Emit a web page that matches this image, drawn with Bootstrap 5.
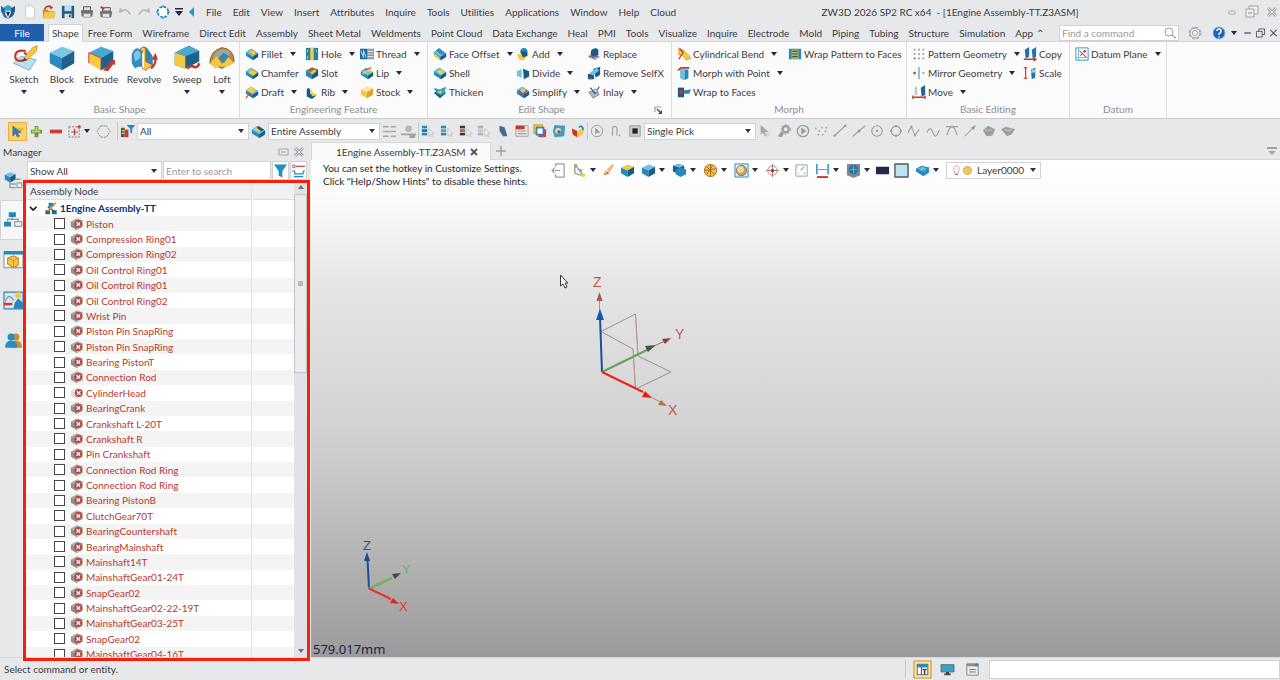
<!DOCTYPE html>
<html lang="en">
<head>
<meta charset="utf-8">
<meta name="viewport" content="width=device-width, initial-scale=1">
<title>ZW3D 2026 SP2 RC x64 - [1Engine Assembly-TT.Z3ASM]</title>
<link href="https://cdn.jsdelivr.net/npm/bootstrap@5.3.0/dist/css/bootstrap.min.css" rel="stylesheet">
<style>
:root{--chrome:#e6e8ea;--line:#c9cbcd;--ink:#3b3b42;--red-ink:#b8392f}
body{font:10px/14px Lato,"Noto Sans",sans-serif;font-variant-ligatures:none;color:var(--ink);background:var(--chrome)}
a{color:inherit;text-decoration:none}
button{font:inherit;color:inherit}
.tool{border:0;background:none;padding:0;display:inline-flex;align-items:center;justify-content:center;white-space:nowrap;font-variant-ligatures:none}
[data-ic]{display:inline-flex;flex:none;width:16px;height:16px}
[data-ic] svg{width:100%;height:100%;overflow:visible}
.tri{flex:none;width:0;height:0;border:3px solid transparent;border-top:4px solid #26264a;border-bottom:0}
.titlebar{height:24px}
.titlebar .quick{width:19px}
.titlebar .quick [data-ic]{width:14px;height:14px}
.titlebar .quick-end{width:13px}
.menus{gap:11px}
.tabrow{height:18px;border-bottom:1px solid #d3d6d9}
.tabrow .nav-link{padding:0 5px;line-height:18px;color:var(--ink);white-space:nowrap}
.tabrow .file-tab{background:#1f5fae;color:#fff;width:44px;padding:0;text-align:center}
.tabrow .nav-link.active{background:#fbfbfb;border:1px solid #d0d3d6;border-bottom:0;line-height:17px;height:18px;padding:0 3px}
.doc-ctl [data-ic]{width:13px}
.find{width:120px;height:16px;border:1px solid #cfd1d3;background:#fff}
input.plain{font:inherit;line-height:14px;border:0;min-height:0;padding:0 2px;background:transparent;color:var(--ink);border-radius:0;min-width:0}
input.plain::placeholder{color:#9a9a9e}
.ribbon{height:77px;background:#fbfbfb;border-bottom:1px solid var(--line)}
.rgroup{border-right:1px solid #dcdee0;padding:2px 5px 0 5px}
.rgroup h2{font-size:10px;line-height:14px;color:#8d8d92;margin:0;text-align:center;font-weight:400}
.cmds{display:grid;grid-auto-flow:column;grid-template-rows:repeat(3,19px);justify-content:start;height:58px}
.cmds .tool{justify-content:flex-start;gap:2px}
.cmds [data-ic]{width:14px;height:14px}
.cmds .tri{margin-left:5px}
.g1{width:240px}.g2{width:188px}.g3{width:244px}.g4{width:235px}.g5{width:163px}.g6{width:97px}
.g2 .cmds{grid-template-columns:60px 55px auto}
.g3 .cmds{grid-template-columns:83px 71px auto}
.g4 .cmds{grid-template-columns:111px auto}
.g5 .cmds{grid-template-columns:111px auto}
.bigs{display:grid;grid-template-columns:38px 38px 40px 46px 40px 30px;height:58px}
.bigs .tool{flex-direction:column;justify-content:flex-start}
.bigs [data-ic]{width:28px;height:28px}
.bigs .tri{margin-top:4px}
.bar{height:24px;padding-left:3px}
.bar .tool{width:19px;height:19px}
.bar .hot{background:#fbd36b;border:1px solid #e8ad3c}
.bar [data-ic]{width:15px;height:15px}
.bar .grip{width:5px}
.vsep{width:1px;height:18px;background:#c6c8ca;flex:none}
.share{flex:none}.share .tool{flex:1 1 0;width:auto}
.share-a{width:168px}.share-b{width:56px}.share-c{width:261px}
.share [data-ic]{width:14px;height:14px}
.form-select.pick{font:inherit;line-height:14px;height:17px;padding:0 14px 0 2px;border:1px solid #cfd1d3;border-radius:0;color:var(--ink);width:112px;flex:none;background:#fff url("data:image/svg+xml,%3Csvg xmlns='http://www.w3.org/2000/svg' viewBox='0 0 6 4'%3E%3Cpath d='M0 0h6L3 4z' fill='%2333333a'/%3E%3C/svg%3E") no-repeat right 4px center/6px 4px}
.manager{width:311px;flex:none}
.m-head{height:17px;padding:0 4px 0 3px}
.rail{width:26px;flex:none}
.rail .tool{height:40px;width:26px}
.rail .tool.on{background:#f6f7f8;border:1px solid #d3d5d7}
.rail [data-ic]{width:19px;height:19px}
.m-search{height:20px;gap:1px;padding:1px 4px 0 0;margin-left:1px}
.m-search .pick{width:135px}
.m-search .box{border:1px solid #cfd1d3;background-color:#fff;height:19px}
.m-search .tool{width:19px}
.m-search .tool [data-ic]{width:15px}
.frame-red{position:absolute;inset:0 0 -4px -3px;border:3px solid #f5200d;z-index:3;pointer-events:none}
.tree{margin-right:1px}
.t-head{height:20px;padding-left:4px;line-height:22px;background:#f0f1f2;border-bottom:1px solid #dadcde;flex:none}
.t-root{height:16px;gap:1px;color:#0b2f78;flex:none;background:#fff}
.t-root [data-ic]{height:13px}
.t-cols{background:#fff}
.t-cols::after{content:"";position:absolute;top:0;bottom:0;left:225px;width:1px;background:#e0e2e4}
.nodes{height:calc(100% - 31px);flex:none}
.nodes li{flex:1 1 0;min-height:0;padding-left:28px;color:var(--red-ink)}
.nodes li:nth-child(odd){background:#f4f4f4}
.nodes input{appearance:none;width:11px;height:11px;border:1px solid #45454a;background:#fff;margin:0 5px 0 0;border-radius:0}
.nodes [data-ic]{width:14px;height:14px;margin-right:2px}
.sbar{width:16px;background:#dfe3e6;flex:none;padding:1px 3px 0 0}
.sbar .thumb{height:179px;border:1px solid #c2c4c8;background:#e9ebed;margin-top:1px}
.sbar .thumb i{width:5px;height:5px;background:#b6b8bb}
.sbar button{height:12px}
.sbar .tri{border-top-color:#6d6f73}
.up{transform:rotate(180deg)}
.doc-tabs{height:17px;border-bottom:1px solid #d5d7d9}
.doc-tabs .doc{width:180px;flex:none;background:#fafafa;height:18px;border:1px solid #d5d7d9;border-bottom:0;padding:0 8px 0 24px}
.stage{background:linear-gradient(#fff 0,#fbfbfb 7%,#e6e6e6 24%,#d2d2d2 54%,#b9b9b9 76%,#9a9b9a 100%)}
.hint{width:230px;line-height:13px;color:#25252a;padding:2px 0 0 12px;white-space:nowrap}
.view-tools{height:20px;padding-left:8px}
.view-tools .tool{min-width:19px;height:19px}
.view-tools .tool.dd{width:31px;gap:3px;padding-left:1px}
.view-tools [data-ic]{width:15px;height:15px}
.view-tools .layer{border:1px solid #cfd1d3;background:#fff;width:95px;height:17px;margin-left:4px;padding-left:4px}
.view-tools .layer .form-select.pick{width:65px;border:0;height:14px;margin-left:2px}
.view-tools .layer [data-ic]{width:11px;height:11px}
.scene{position:absolute;overflow:visible}
.scene-main{left:240px;top:105px}
.scene-triad{left:45px;top:375px}
.scale{position:absolute;left:2px;bottom:0;font:13px/15px "Noto Sans",sans-serif;color:#23234f}
.status{height:23px;border-top:1px solid #d6d8da;padding-left:4px}
.status .fill{width:291px;height:19px;border:1px solid #cfd1d3;background:#fff}
.status .tool{width:25px;height:19px}
.status [data-ic]{width:13px;height:13px}
.status .st-on [data-ic]{width:17px;height:17px}
</style>
</head>
<body class="vh-100 d-flex flex-column overflow-hidden">

<header>
  <div class="titlebar d-flex align-items-center">
    <span data-ic="logo"></span>
    <div class="d-flex align-items-center ps-1" id="quick"></div>
    <nav class="menus d-flex ms-1 ps-1" id="menus" aria-label="Main menu"></nav>
    <span class="mx-auto text-nowrap">ZW3D 2026 SP2 RC x64 &nbsp;- [1Engine Assembly-TT.Z3ASM]</span>
    <div class="d-flex gap-1">
      <button class="tool" aria-label="Minimize"><span data-ic="wmin"></span></button>
      <button class="tool" aria-label="Restore"><span data-ic="wres"></span></button>
      <button class="tool" aria-label="Close"><span data-ic="wclose"></span></button>
    </div>
  </div>
  <div class="tabrow d-flex">
    <nav class="nav flex-nowrap" id="tabs" aria-label="Ribbon tabs"></nav>
    <div class="ms-auto d-flex align-items-center">
      <label class="find d-flex align-items-center"><input class="plain form-control flex-fill" placeholder="Find a command" aria-label="Find a command"><span data-ic="search"></span></label>
      <button class="tool ms-2" aria-label="Settings"><span data-ic="gear"></span></button>
      <button class="tool ms-2 gap-1" aria-label="Help"><span data-ic="help"></span><i class="tri"></i></button>
      <div class="doc-ctl d-flex ms-1">
        <button class="tool" aria-label="Minimize document"><span data-ic="dmin"></span></button>
        <button class="tool" aria-label="Restore document"><span data-ic="dres"></span></button>
        <button class="tool" aria-label="Close document"><span data-ic="dclose"></span></button>
      </div>
    </div>
  </div>
  <div class="ribbon d-flex">
    <section class="rgroup g1"><div class="bigs" data-big="Sketch*,Block*,Extrude,Revolve,Sweep*,Loft*"></div><h2>Basic Shape</h2></section>
    <section class="rgroup g2"><div class="cmds" data-cmds="Fillet*,Chamfer,Draft*,Hole*,Slot,Rib*,Thread*,Lip*,Stock*"></div><h2>Engineering Feature</h2></section>
    <section class="rgroup g3"><div class="cmds" data-cmds="Face Offset*,Shell,Thicken,Add*,Divide*,Simplify*,Replace,Remove SelfX,Inlay*"></div><h2 class="d-flex"><span class="flex-fill">Edit Shape</span><span data-ic="launch"></span></h2></section>
    <section class="rgroup g4"><div class="cmds" data-cmds="Cylindrical Bend*,Morph with Point*,Wrap to Faces,Wrap Pattern to Faces"></div><h2>Morph</h2></section>
    <section class="rgroup g5"><div class="cmds" data-cmds="Pattern Geometry*,Mirror Geometry*,Move*,Copy,Scale"></div><h2>Basic Editing</h2></section>
    <section class="rgroup g6"><div class="cmds" data-cmds="Datum Plane*"></div><h2>Datum</h2></section>
  </div>
  <div class="bar d-flex align-items-center">
    <span data-ic="grip" class="grip"></span>
    <button class="tool hot" aria-label="Pick"><span data-ic="pick"></span></button>
    <button class="tool" aria-label="Add to selection"><span data-ic="plus"></span></button>
    <button class="tool" aria-label="Remove from selection"><span data-ic="minus"></span></button>
    <button class="tool" aria-label="Window select"><span data-ic="winsel"></span></button>
    <i class="tri"></i>
    <button class="tool ms-1" aria-label="Polygon select"><span data-ic="hexa"></span></button>
    <span class="vsep ms-1"></span>
    <button class="tool" aria-label="Filter"><span data-ic="colfilter"></span></button>
    <select class="form-select pick" aria-label="Entity filter"><option>All</option></select>
    <button class="tool" aria-label="Scope"><span data-ic="scope"></span></button>
    <select class="form-select pick" aria-label="Scope"><option>Entire Assembly</option></select>
    <button class="tool" aria-label="Align"><span data-ic="align1"></span></button>
    <button class="tool" aria-label="Section"><span data-ic="align2"></span></button>
    <span class="vsep"></span>
    <div class="share share-a d-flex" data-tools="sel1,sel2,sel3,sel4,book,sheet,copyb,globe,find3"></div>
    <span class="vsep"></span>
    <div class="share share-b d-flex" data-tools="circ-cursor,magnet,square"></div>
    <select class="form-select pick" aria-label="Pick mode"><option>Single Pick</option></select>
    <div class="share share-c d-flex" data-tools="gcursor,ggear,gplay,gdots,gline,gmid,gcdot,gcirc,gzig,gwave,gtan,garrow,gface,gface2"></div>
  </div>
</header>

<main class="d-flex flex-fill" style="min-height:0">
  <aside class="manager d-flex flex-column">
    <div class="m-head d-flex align-items-center"><span>Manager</span>
      <button class="tool ms-auto" aria-label="Float"><span data-ic="mfloat"></span></button>
      <button class="tool" aria-label="Close manager"><span data-ic="wclose"></span></button></div>
    <div class="d-flex flex-fill" style="min-height:0">
      <div class="rail d-flex flex-column">
        <button class="tool" aria-label="History"><span data-ic="rail1"></span></button>
        <button class="tool on" aria-label="Assembly"><span data-ic="rail2"></span></button>
        <button class="tool" aria-label="Visual"><span data-ic="rail3"></span></button>
        <button class="tool" aria-label="Render"><span data-ic="rail4"></span></button>
        <button class="tool" aria-label="Roles"><span data-ic="rail5"></span></button>
      </div>
      <div class="d-flex flex-column flex-fill" style="min-width:0">
        <div class="m-search d-flex">
          <select class="form-select pick box" aria-label="Show"><option>Show All</option></select>
          <input class="plain form-control box flex-fill" placeholder="Enter to search" aria-label="Enter to search">
          <button class="tool box" aria-label="Filter tree"><span data-ic="funnel"></span></button>
          <button class="tool box" aria-label="Options"><span data-ic="opts"></span></button>
        </div>
        <div class="position-relative d-flex flex-fill tree" style="min-height:0">
          <div class="position-relative t-cols d-flex flex-column flex-fill overflow-hidden">
            <div class="t-head">Assembly Node</div>
            <div class="t-root d-flex align-items-center fw-bold"><span data-ic="chev"></span><span data-ic="asm"></span><span>1Engine Assembly-TT</span></div>
            <ul class="nodes list-unstyled m-0 d-flex flex-column" id="nodes"></ul>
          </div>
          <div class="sbar d-flex flex-column">
            <button class="tool" aria-label="Scroll up"><i class="tri up"></i></button>
            <div class="thumb d-flex align-items-center justify-content-center"><i></i></div>
            <button class="tool mt-auto" aria-label="Scroll down"><i class="tri"></i></button>
          </div>
          <div class="frame-red"></div>
        </div>
      </div>
    </div>
  </aside>

  <section class="flex-fill d-flex flex-column" style="min-width:0">
    <div class="doc-tabs d-flex align-items-center">
      <div class="doc d-flex align-items-center justify-content-between"><span class="text-nowrap">1Engine Assembly-TT.Z3ASM</span><button class="tool" aria-label="Close tab"><span data-ic="tabx"></span></button></div>
      <button class="tool" aria-label="New tab"><span data-ic="tabplus"></span></button>
      <button class="tool ms-auto" aria-label="Tab list"><span data-ic="tablist"></span></button>
    </div>
    <div class="stage position-relative flex-fill overflow-hidden">
      <div class="d-flex">
        <div class="hint">You can set the hotkey in Customize Settings.<br>Click "Help/Show Hints" to disable these hints.</div>
        <div class="view-tools d-flex align-items-center" id="view"></div>
      </div>

      <svg class="scene scene-main" width="150" height="160" viewBox="0 0 150 160" fill="none" font-family="Liberation Sans, sans-serif" font-size="14">
        <path d="M50 66.500 84.500 49 87 91 120 107 84.500 124 82 84 50 66.500" stroke="#949494"/>
        <path d="M84.500 49 87 91M82 84 84.500 124" stroke="#e08d80" stroke-width=".6"/>
        <path d="M48.500 55V36" stroke="#d7806c"/><path d="M48.500 27l-3 9h6z" fill="#a3564b"/>
        <path d="M51 107 49 52" stroke="#1c4fa2" stroke-width="2"/><path d="M49 44l-4 11h8z" fill="#1356b0"/>
        <path d="M51 107 98 84" stroke="#5fa653" stroke-width="2"/><path d="M105 80l-11 1 3 6z" fill="#46524b"/>
        <path d="M103 81 114 76" stroke="#a06a60"/><path d="M120 73l-9 1 3 5z" fill="#96403d"/>
        <path d="M51 107 92 127" stroke="#ef2215" stroke-width="2"/><path d="M101 133l-10-1 3-6z" fill="#e51e12"/>
        <path d="M100 132l9 5" stroke="#c98060"/><path d="M116 141l-9-1 3-5z" fill="#b07636"/>
        <text x="42" y="22" fill="#c2594b">Z</text><text x="124" y="74" fill="#c2594b">Y</text><text x="117" y="150" fill="#c2594b">X</text>
        <path d="M9.500 10v11l2.500-2 2 4 2-1-2-4h3z" fill="#fff" stroke="#3a3a3a"/>
      </svg>
      <svg class="scene scene-triad" width="60" height="80" viewBox="0 0 60 80" fill="none" font-family="Liberation Sans, sans-serif" font-size="13">
        <path d="M13 53.500 11.500 24" stroke="#1e4f9d" stroke-width="2"/><path d="M11 17l-3 9h6z" fill="#134c9f"/>
        <path d="M13 53.500 36 43" stroke="#72b25f" stroke-width="3"/><path d="M45 38l-9 1 3 5z" fill="#3f484d"/>
        <path d="M13 53.500 35 64" stroke="#ec3023" stroke-width="2"/><path d="M43 69l-9-1 3-5z" fill="#e52519"/>
        <text x="7" y="15" fill="#1c54a8">Z</text><text x="46" y="39" fill="#6bb35c">Y</text><text x="43" y="76" fill="#e8362a">X</text>
      </svg>
      <div class="scale">579.017mm</div>
    </div>
  </section>
</main>

<footer class="status d-flex align-items-center">
  <span>Select command or entity.</span>
  <span class="vsep ms-auto me-1"></span>
  <button class="tool st-on" aria-label="Manager pane"><span data-ic="st1"></span></button>
  <button class="tool" aria-label="Display"><span data-ic="st2"></span></button>
  <button class="tool" aria-label="Output"><span data-ic="st3"></span></button>
  <div class="fill ms-1"></div>
</footer>

<script>
const B='#2589bd',D='#165a86',L='#6ec3e0',Y='#f6c944',O='#d18b27',R='#c8372b',G='#9b9da0',K='#46484c';
const p=(d,f,s='none',w=1)=>`<path d="${d}" fill="${f}" stroke="${s}" stroke-width="${w}" stroke-linejoin="round"/>`;
const c=(x,y,r,f,s='none',w=1)=>`<circle cx="${x}" cy="${y}" r="${r}" fill="${f}" stroke="${s}" stroke-width="${w}"/>`;
const cube=(t,l,r)=>p('M1 5 8 1.5 15 4 8 8z',t)+p('M1 5 8 8V15L1 11z',l)+p('M8 8 15 4V11L8 15z',r);
const slab=p('M1 6 7 2 15 7V11L9 15 1 10z',B)+p('M1 6 7 2 15 7 9 11z',L)+p('M9 11 15 7V11L9 15z',D);
const cur=(f='#fff',s=G)=>p('M9 5v9l2-2 2 3 1-1-2-3h3z',f,s,.8);
const list=(a,b)=>p('M1 2h6v3H1z',a)+p('M1 6h6v3H1z',b)+p('M1 10h6v3H1z',a)+cur('#f0f0f0','#b9bbbd');
const line=(d,s=G,w=1.200)=>p(d,'none',s,w);
const person=(x,f)=>c(x,5,3,f)+p(`M${x-5} 14q0-6 5-6t5 6z`,f);
const I={
 logo:p('M1 2 6 5 5 10 8 15 4 13 1 7z','#1a6fae')+p('M15 2 10 5 11 9 8 15 13 12 15 7z','#1e5f8e')+p('M4 3 8 1 12 3 8 8z','#2aa0cf')+p('M6 8h4l-2 5z','#21364a'),
 new:p('M3 1h7l3 3v11H3z','#fff','#c1c3c5'),
 open:p('M1 5h5l2 2h6v8H1z',O)+p('M3 8h13l-2 7H1z',Y)+line('M3 5q2-5 7-3',R,2)+p('M9 0l4 3-4 2z',R),
 save:p('M1 1h14v14H1z','#255a86')+p('M4 1h8v6H4z','#b9e0ee')+p('M4 10h8v5H4z','#dfe5e9')+p('M9 11h2v3H9z',K),
 print:p('M4 2h8v5H4z','#ddd',K)+p('M1 6h14l-1 7H2z','#6a6c70')+p('M4 10h8v4H4z','#e8e8e8',G),
 print2:p('M4 3h9v4H4z','#ddd',K)+p('M1 7h14l-1 7H2z','#6a6c70')+p('M4 10h8v4H4z','#e8e8e8',G)+line('M2 2l4 3',R,2),
 undo:line('M4 7q6-4 10 4','#b6b8ba',1.800)+p('M1 9 2 3l5 4z','#b6b8ba'),
 redo:line('M12 7q-6-4-10 4','#b6b8ba',1.800)+p('M15 9 14 3 9 7z','#b6b8ba'),
 target:`<circle cx="8" cy="8" r="6" fill="#fff" stroke="${B}" stroke-width="2" stroke-dasharray="3 1.7"/>`+line('M8 0v3M8 13v3M0 8h3M13 8h3',B),
 down2:p('M4 4h8v1.500H4zM4 7h8L8 12z','#26264a'),
 back:p('M10 3v10L5 8z','#2196c9'),
 wmin:p('M5 7h6v3H5z','#eee','#a9abad'),wres:p('M5 2h9v8H5z','#eee','#a2a4a6')+p('M2 5h8v8H2z','#eee','#a2a4a6')+line('M4 9h4',G),
 wclose:line('M4 4 12 12M12 4 4 12','#a2a4a6',3)+line('M4 4 12 12M12 4 4 12','#f2f2f2',1),
 mfloat:p('M4 5h9v6H4z','#ececec','#a2a4a6')+line('M6 8h5'),
 search:c(7,7,4,'none',G)+line('M10 10l4 3',G),
 gear:c(8,8,5,'#eee',G)+c(8,8,2.500,'#fff',G)+`<circle cx="8" cy="8" r="6" fill="none" stroke="${G}" stroke-width="1" stroke-dasharray="2.500 2.200"/>`,
 help:c(8,8,6,'#1a65b6','#8bb2dd')+line('M6 6q0-2 2-2t2 2-2 3v1','#fff',1.500)+c(8,12,.8,'#fff'),
 dmin:line('M4 8h8',K,1.500),dres:p('M3 6h7v7H3zM6 6V3h7v7h-3','none',K),dclose:line('M4 4l8 8M12 4l-8 8',K,1.300),
 Sketch:p('M2 11 6 7 15 9 11 15z','#b9e0ef','#7aa8bd',.5)+line('M9 4q-6-1-6 3t6 2q3-2-1-4',R,1.200)+p('M8 8 13 2 15.500 1 15 4 10 9z',Y,O,.5)+p('M8 8l2 1-3 1z',K),
 Block:cube('#7ac7e4','#2a8cbe','#1d618d'),
 Extrude:cube('#4aa8cf',Y,'#1d618d')+p('M9 15l4-4-1-1 4-1v3l-1-.5-3 4z',R)+line('M1 11V5l7 3v7',R,.5),
 Revolve:p('M5 4Q8-1 11 4l2 3v6H2L1 8z','#2d86b5')+p('M5 4Q8 0 9 3v7l4 2-4 3-2-1V4z',Y,R,.4)+p('M1 6q2-6 6-2v7l-4 3-2-3z','#2f8fbd')+p('M2 6q2-4 4-1v3l-3 2z','#7ec6df')+p('M7 5v8l1 1V5z','#fff')+line('M12 14q3-2 2.500-7',R,1.200)+p('M12.500 9l2-4 1.500 4z',R),
 Sweep:p('M1 5 9 1 15 4v6l-8 4-6-2z','#1d618d')+p('M1 5 9 1 15 4 7 7z','#4aa8cf')+p('M1 5l6 2v7l-6-2z',Y)+line('M8 14q2-2 4-1t3-2',R,1.500),
 Loft:p('M1 11Q1 4 8 2q7 1 7 8l-7 4z','#b98a3a','#6d5a38',.4)+p('M3 8q1-4 5-5 4 0 5 3l-5 2z','#9aa79a')+p('M1 11 5 7l3 5-4 2z',Y)+p('M7 13l4-6 4 4-4 2z',Y)+p('M6 8l3-3 3 2-3 4z','#2f8ab0'),
 Fillet:slab+p('M4 5q5-3 8 1l-3 5q0-4-5-6z',Y,O,.5),Chamfer:slab+p('M7 4 14 7 10 11 4 8z',Y,O,.5),
 Draft:slab+p('M1 6 7 2 13 5 9 9z',Y)+line('M1 15l4-5 3 4',R),
 Hole:p('M1 1h14v14H1z','#2381a6')+p('M6 1h4v14H6z',Y)+line('M3 3v3M13 3v3M3 10v4','#8fd5d0'),
 Slot:cube('#a46b35',B,D)+p('M6 7l5-3 2 2-5 4z',Y),Rib:p('M2 5q4-5 4 5l7 2-5 4-6-3z',D)+p('M7 3q0 6 7 8l-5 2q-4-3-2-10z',Y),
 Thread:p('M0 2h8v12H0z','#1f67a5')+p('M8 2h8v12H8z','#89989f')+line('M1 4l3 8V4l3 8','#9edbe9')+line('M9 5h6M9 8h6M9 11h6','#e1e5e7'),
 Lip:slab+line('M3 9l6-4 4 2',Y,2)+line('M5 5l8-3',R),Stock:cube('#ffe49a',Y,'#dca335'),
 'Face Offset':slab+p('M2 7l6 5-1 2-6-4z',Y)+p('M3 4 7 1l7 6-4 2z','#2f8fbd'),Shell:slab+p('M5 6l4-2 4 3-4 3z',Y),Thicken:p('M1 9l6-4 8 4-7 6z',D)+p('M1 3l6 2 8-3-2 7-4 3-5-3z','#31a4bd')+p('M5 8l5-2-1 4z',Y),
 Add:c(9,5,4,B)+p('M1 8h14l-6 7H4z',Y)+p('M5 5h8v5l-5 2z',D),Divide:p('M1 6l6-3v11l-6-3z',L)+p('M8 3l7 3v6l-6 3z',D)+line('M7 1v14','#fff'),
 Simplify:slab+line('M3 6l5 5 5-5',R,1.500)+c(8,6,2,Y),Replace:p('M1 11l6-3 8 3-6 4z','#83b7c9')+p('M5 3l5-2 3 2v6l-6 2-3-2z',D)+line('M2 10l5 2 6-2',R),
 'Remove SelfX':p('M1 9h7v6H1zM7 3l8-2v9l-5 3z',D)+p('M3 8l8-6 3 3-8 6z',L)+line('M2 13l3 2',R,2),Inlay:p('M2 8l5 7 7-4-3-5z','#a9bfc9',K,.6)+line('M4 3l5 7 5-8',K)+p('M8 5h4v3H8z','#fff',B),
 'Cylindrical Bend':p('M2 1l6 3 5 5 3 4-6 2-3-5-5-1z',Y,O,.7)+line('M2 14l5-8-4-4',R,1.500),
 'Morph with Point':p('M4 4h9v10l-4 2-5-2z',B)+p('M4 4h5v12l-5-2z',L)+line('M1 5l4-3h9',R,2),
 'Wrap to Faces':p('M1 3h7v11H1z',D)+p('M3 6h4v4H3z',R)+p('M8 6l8-1-2 5H8z',B),
 'Wrap Pattern to Faces':p('M1 2h14v12H1z',B)+p('M4 3h8v11H4z','#b9b84a')+line('M5 5h6M5 8h6M5 11h6',D),
 'Pattern Geometry':['2 2','7 2','12 2','2 7','7 7','12 7','2 12','7 12','12 12'].map(q=>p(`M${q}h2v2h-2z`,q=='2 12'?R:'#9a9ca0')).join(''),
 'Mirror Geometry':line('M8 1v14','#4fa9cc',1.500)+c(3,8,1.500,R)+c(13,8,1.200,G),
 Move:p('M3 3l3-2v10l-3 1z','#c6c9cb')+p('M10 3l5-3v11l-4 2z','#1a66a6')+line('M1 14h14M1 12v4M15 12v4',R,1.500),
 Copy:p('M2 3l5-3v11l-4 2zM10 3l5-3v11l-4 2z','#1a76b0')+line('M1 14h14M12 12l3 2-3 2',R,1.500),
 Scale:line('M3 1v14M1 2h4M1 14h4',R,1.300)+p('M9 4l5-2v11l-4 2z','#1a76b0')+p('M9 8l5-1v-3l-4 0z','#b8cbd5'),
 'Datum Plane':p('M1 1h14v14H1z','#fff',B)+line('M4 1v14M1 12h14','#7cc0da')+line('M5 4l8 8M6 10l3-3',R)+c(11,5,1.500,R),
 launch:line('M5 5v5M5 5h6')+p('M12 12V8l-4 4z',K)+line('M7 7l4 4',K),
 grip:line('M8 1v14','#8f9193',1.500).replace('/>',' stroke-dasharray="1.500 1.500"/>'),
 pick:p('M3 2v11l3-3 2 4 2-1-2-4h4z','#2188b9','#426',.4)+line('M9 4l3 3 2-3','#d49a28'),
 plus:line('M8 2v12M2 8h12','#6d9a3c',4)+line('M8 3v6M3 8h9','#b9d46c',2),minus:p('M2 6h13v4H2z','#d23a32'),
 winsel:`<rect x="2" y="3" width="11" height="11" fill="none" stroke="#77797c" stroke-dasharray="2 1.500"/>`+line('M8 5v7M4.500 8.500h7M13 1v4M11 3h4',R),
 hexa:`<path d="M5 2h6l4 6-4 6H5L1 8z" fill="none" stroke="#808285" stroke-dasharray="2 1"/>`,
 colfilter:p('M1 4h4v10H1z','#4d5e4e')+p('M5 6h4v8H5z',R)+p('M7 1h9l-3 4v5l-2-1V5z',B)+line('M2 7h3M2 10h3',Y),
 scope:slab+p('M3 6l5-4 6 4-5 2z',Y)+p('M8 2l6 4-3 2-5-4z',D),
 align1:line('M1 3h6M9 3h6M1 8h14M1 13h6M9 13h6','#a5a7a9',1.500),align2:c(8,5,3.500,'#b5b7b9')+p('M0 10h16v2H0zM9 12h6v3H9z','#a1a3a5'),
 sel1:list('#248dbd','#1c6fa5'),sel2:list('#248dbd','#7d8f99'),sel3:list('#3b3b42','#c8523f'),sel4:list('#b0b2b4','#c3c5c7'),
 book:p('M4 2l6 2 3 10-5 0-4-6z','#1c7fb0')+line('M5 3l6 10',R,1.500),
 sheet:p('M1 2h14v12H1z','#efe8dd',G)+p('M1 2h10v4H1z',R)+line('M3 8h10M3 11h10'),
 copyb:p('M1 1h10v10H1z',Y,O)+p('M6 6h9v9H6z','#d2413b')+p('M4 4h8v8H4z','#fff',B,2),
 globe:p('M3 1l12 1-1 12-11 1-2-7z','#3b9fc0')+c(7,8,3.500,'#d7d9cf')+c(8,9,2,R),find3:p('M1 6l7 2 7-5-1 9-7 3-5-3z',Y)+p('M1 5l6 3v7l-5-3z',R)+line('M9 4q4-4 5 3',B,2),
 'circ-cursor':c(8,8,6.500,'none','#96989a')+p('M6 4v8l2-2h4z','#96989a'),magnet:line('M4 13V4q4-3 5 1v8','#a5a7a9',1.500)+c(12,13,1,G),square:p('M2 2h12v12H2z','#c9cbcd',G)+p('M5 5h6v6H5z','#222'),
 gcursor:p('M3 1v11l3-2 2 4 2-1-2-4h4z','#a7a9ab')+c(11,12,2.500,'#d5d7d9'),ggear:c(10,6,3.500,'none',G,2.500)+`<circle cx="10" cy="6" r="5.500" fill="none" stroke="${G}" stroke-dasharray="2 2"/>`+p('M1 14l4-6 3 3-3 4z',G),gplay:c(8,8,6.500,'none',G,1.500)+p('M6 4v8l6-4z',G),
 gdots:[[2,5],[6,8],[9,4],[13,8],[5,12],[10,12],[14,4]].map(a=>c(...a,1,G)).join(''),gline:line('M1 14 14 2')+c(14,2,1.500,G)+c(2,13,1.200,G),gmid:line('M1 14 15 2')+c(8,8,1.800,G),
 gcdot:c(8,8,6,'none',G,1.300)+c(8,8,1.500,G),gcirc:c(8,8,5.500,'none',G,1.300)+c(8,2.500,1.300,G)+c(8,13.500,1.300,G)+c(2.500,8,1.300,G)+c(13.500,8,1.300,G),
 gzig:line('M1 10 5 3 9 13 14 6')+c(5,3,1.200,G)+c(9,13,1.200,G),gwave:line('M1 10q4-9 7 0t7-3'),gtan:line('M1 3h14M2 13q3-10 6-10t6 10'),garrow:line('M2 14 12 4')+p('M15 1l-6 3 3 3z',G),
 gface:p('M1 7l6-5 8 4-3 7-7 1z',G)+line('M3 7h9','#c8cacc'),gface2:p('M0 6l6-3 10 3-4 6-5 2z',G)+line('M4 6l4 2 4-2','#c8cacc'),
 funnel:p('M1 1h14L10 8v7l-4-2V8z','#2191bd'),opts:c(3,3,1.500,'#fff',R)+line('M5 3h10',R)+line('M1 8h3v3h9V8h2','#2191bd',1.300)+line('M3 14h10','#2191bd',1.500),
 chev:line('M3 6l4 4 4-4','#222',2),asm:p('M5 1h6v5H5z',B)+p('M1 10h6v5H1zM9 10h6v5H9z','#2b6c96')+line('M4 6l9 6',D,1.500)+line('M14 1 4 11',O,1.800),
 part:cube('#a9abad','#8e9092','#c2c3c5')+c(9.500,8,4.500,'#b4483f')+line('M7.500 6l4 4M11.500 6l-4 4','#fff',1.400),
 part2:cube('#e3e4e5','#dadbdc','#eee')+c(10,8,4.500,'#b4483f')+line('M8 6l4 4M12 6l-4 4','#fff',1.400),
 rail1:`<g transform="scale(.65)">${cube(L,B,D)}</g>`+line('M5 9v5h5M5 11h5M9 7h5')+p('M11 10h4v4h-4z','#eee',G),
 rail2:p('M4 1h6v4H4zM0 9h6v4H0z','#2288b5')+line('M7 5v3M3 9V7h9v2')+p('M9 9h6v4H9z','#eee',G),
 rail3:p('M0 1h16v13H0z','#fff',G)+p('M0 0h16v3H0z',B)+p('M3 6l5-2 4 2v6l-4 2-5-3z',Y,O)+line('M3 6l5 2 4-2M8 8v5',O,.8),
 rail4:p('M0 1h16v14H0z','#d9e7ec',B)+line('M0 11Q4 0 8 8')+p('M9 10l3-4 4 4v5H8z',B)+c(12,3.500,2.500,Y)+line('M0 11h7',R,2),
 rail5:person(10,O)+person(6,'#238ec2'),
 tabx:line('M5 5l6 6M11 5l-6 6','#555',1.800),tabplus:line('M10 3v10M5 8h10','#a0a2a4',1.500),tablist:p('M3 4h10v2H3zM4 8h8l-4 4z','#a0a2a4'),
 exit:p('M5 4V1h9v14H5v-3','none',G,1.300)+line('M2 8h8M4 5 1 8l3 3',G),csys:line('M3 1v10l10 3M5 4l6 8',G,1.500)+c(4,3,2,'#9fb54b')+c(9,8,2,'#8fb5c1')+c(12,13,2,Y),
 brush:p('M3 13l2-5 4 3z',R)+p('M6 7l6-6 2 2-5 7z','#e9b98a')+c(5,10,1.500,Y),yface:cube(Y,B,D),bface:cube(L,B,D),bface2:p('M1 3l6-2 6 2v6l-5 3-7-3z',D)+p('M4 7l5-2 6 2v5l-6 3-5-3z',B)+p('M1 3l6-2 6 2-5 2z',L),
 wheel:c(8,8,6.500,Y,'#a4601e')+line('M8 2v12M2 8l12-2M4 4l8 8M4 12l6-9','#a4601e',1),shade:p('M1 1h14v14H1z','#e0f0f6',B)+c(8,8,5.500,'#bfa36a',K,.6)+c(7,7,3.500,'#f2dc94'),
 cross:c(8,8,5,'none','#c47168')+line('M8 1v14M1 8h14','#84878a',1)+c(8,8,2,R),plane:p('M2 2h12v12H2z','#fff',G)+line('M4 4v1M4 11h1M10 11h2M7 8l4-4','#7dbdd1'),
 dim:line('M2 1v11M14 1v11',B,1.500)+line('M2 7h12','#5ab1d0',1.200)+line('M2 15h12',R,2),
 shot:p('M1 1h14v12l-7 3-7-3z','#85888b')+c(8,7,5,'#1e79a5')+line('M4 7h8M8 3v8','#7bc5df',.8),dark:p('M1 4h14v8H1z','#26264e'),pale:p('M1 1h14v14H1z','#bfe3f2','#55585c',1.500),
 stack:p('M1 6l6-3 9 2-6 4zM1 6v3l8 5 6-4V6l-6 3z',B)+p('M3 6l5-2 5 2-5 2z',L),
 bulb:p('M5 12V9Q2 2 8 1q6 1 3 8v3z','#fff','#c98b77')+line('M6 14h4',K),sun:c(8,8,6,Y,G),
 st1:p('M0 0h16v16H0z','#ffe9a3',O)+p('M3 3h10v10H3z','#fff','#667')+p('M3 3h10v3H3z',B)+line('M7 5v8','#667')+line('M8 8h4M10 8v5',K,1.500),
 st2:p('M0 2h16v9H0z','#3ca0c7','#52636d')+p('M6 11h4v2h2v2H4v-2h2z',K),st3:p('M1 1h14v14H1z','#e8ecee','#777')+p('M1 1h14v3H1z','#888d91')+p('M11 1h4v3h-4z',B)+line('M4 8h8M4 11h8','#777')
};
const ic=n=>`<span data-ic="${n}"></span>`,$=s=>document.querySelector(s),all=s=>document.querySelectorAll(s);
const tri='<i class="tri"></i>';
const btn=(n,cls='',t='')=>`<button class="tool ${cls}" aria-label="${n}">${ic(n)}${t}</button>`;

$('#quick').innerHTML='new open save print print2 undo redo target'.split(' ').map(n=>btn(n,'quick')).join('')+btn('down2','quick-end')+btn('back','quick-end');
$('#menus').innerHTML='File,Edit,View,Insert,Attributes,Inquire,Tools,Utilities,Applications,Window,Help,Cloud'.split(',').map(t=>`<a href="#">${t}</a>`).join('');
$('#tabs').innerHTML='File,Shape,Free Form,Wireframe,Direct Edit,Assembly,Sheet Metal,Weldments,Point Cloud,Data Exchange,Heal,PMI,Tools,Visualize,Inquire,Electrode,Mold,Piping,Tubing,Structure,Simulation,App ⌃'.split(',')
  .map((t,i)=>`<a href="#" class="nav-link ${i==0?'file-tab me-1':i==1?'active':''}">${t}</a>`).join('');
const cmd=s=>{const dd=s.endsWith('*'),n=s.replace('*','');return `<button class="tool">${ic(n)}<span>${n}</span>${dd?tri:''}</button>`};
all('[data-big]').forEach(e=>e.innerHTML=e.dataset.big.split(',').map(cmd).join(''));
all('[data-cmds]').forEach(e=>e.innerHTML=e.dataset.cmds.split(',').map(cmd).join(''));
all('[data-tools]').forEach(e=>e.innerHTML=e.dataset.tools.split(',').map(n=>btn(n)).join(''));
$('#view').innerHTML='exit,csys*,brush,yface,bface*,bface2*,wheel*,shade*,cross*,plane,dim*,shot*,dark,pale,stack*'.split(',')
  .map(s=>s.endsWith('*')?btn(s.slice(0,-1),'dd',tri):btn(s)).join('')
  +`<label class="layer d-flex align-items-center">${ic('bulb')}${ic('sun')}<select class="form-select pick" aria-label="Layer"><option>Layer0000</option></select></label>`;
$('#nodes').innerHTML='Piston,Compression Ring01,Compression Ring02,Oil Control Ring01,Oil Control Ring01,Oil Control Ring02,Wrist Pin,Piston Pin SnapRing,Piston Pin SnapRing,Bearing PistonT,Connection Rod,CylinderHead,BearingCrank,Crankshaft L-20T,Crankshaft R,Pin Crankshaft,Connection Rod Ring,Connection Rod Ring,Bearing PistonB,ClutchGear70T,BearingCountershaft,BearingMainshaft,Mainshaft14T,MainshaftGear01-24T,SnapGear02,MainshaftGear02-22-19T,MainshaftGear03-25T,SnapGear02,MainshaftGear04-16T'.split(',')
  .map((t,i)=>`<li class="d-flex align-items-center"><input type="checkbox" id="n${i}">${ic(t=='CylinderHead'?'part2':'part')}<label for="n${i}">${t}</label></li>`).join('');
all('[data-ic]').forEach(e=>e.innerHTML=`<svg viewBox="0 0 16 16" aria-hidden="true">${I[e.dataset.ic]||''}</svg>`);
</script>
<script src="https://cdn.jsdelivr.net/npm/bootstrap@5.3.0/dist/js/bootstrap.bundle.min.js"></script>
</body>
</html>
